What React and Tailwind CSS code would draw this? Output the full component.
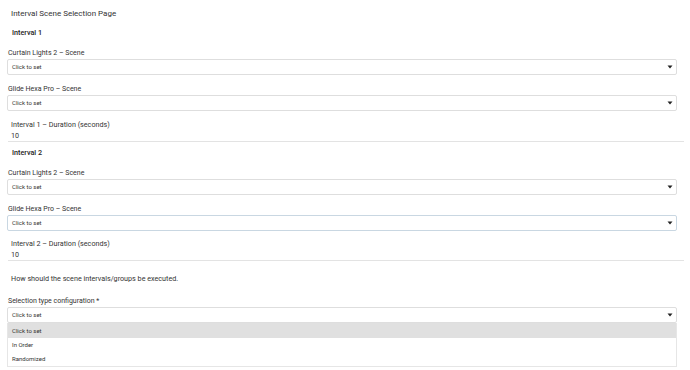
import React from "react";

const Arrow = () => (
  <svg width="6" height="4" viewBox="0 0 6 4" className="shrink-0">
    <path d="M0.5 0.5 L5.5 0.5 L3 3.5 Z" fill="#222" />
  </svg>
);

const SelectBox = ({ focused = false }) => (
  <div
    className={
      "w-[670px] h-[16px] flex items-center justify-between pl-[4px] pr-[3px] bg-white rounded-[2px] border " +
      (focused ? "border-[#c9d7e2]" : "border-[#dedede]")
    }
  >
    <span className="text-[6px] leading-[16px] text-[#333]">Click to set</span>
    <Arrow />
  </div>
);

const Field = ({ label, mt, focused }) => (
  <div className={mt}>
    <div className="pl-[8px] h-[12px] leading-[12px] text-[7px] text-[#333]">{label}</div>
    <div className="pl-[7px]">
      <SelectBox focused={focused} />
    </div>
  </div>
);

const Duration = ({ n, mt }) => (
  <div className={mt + " ml-[8px] w-[676px] border-b border-[#e3e3e3]"}>
    <div className="pl-[3px] h-[10px] leading-[10px] text-[7.2px] text-[#333]">
      Interval {n} – Duration (seconds)
    </div>
    <div className="pl-[3px] h-[11px] leading-[11px] text-[7.2px] text-[#333]">10</div>
  </div>
);

const App = () => {
  return (
    <div className="w-[690px] h-[370px] bg-white overflow-hidden antialiased font-['Roboto',sans-serif]">
      <div className="pt-[8px] pl-[11px] h-[20px] leading-[12px] text-[8px] text-[#333]">
        Interval Scene Selection Page
      </div>

      <div className="mt-[7px] pl-[12px] h-[12px] leading-[12px] text-[7.2px] font-medium text-[#222]">
        Interval 1
      </div>
      <Field label="Curtain Lights 2 – Scene" mt="mt-[8px]" />
      <Field label="Glide Hexa Pro – Scene" mt="mt-[8px]" />
      <Duration n={1} mt="mt-[9px]" />

      <div className="mt-[5px] pl-[12px] h-[12px] leading-[12px] text-[7.2px] font-medium text-[#222]">
        Interval 2
      </div>
      <Field label="Curtain Lights 2 – Scene" mt="mt-[8px]" />
      <Field label="Glide Hexa Pro – Scene" mt="mt-[8px]" focused />
      <Duration n={2} mt="mt-[8px]" />

      <div className="mt-[12px] pl-[11px] h-[12px] leading-[12px] text-[7.2px] text-[#333]">
        How should the scene intervals/groups be executed.
      </div>

      <Field label="Selection type configuration *" mt="mt-[10px]" />
      <div className="ml-[7px] w-[670px] border-x border-b border-[#e6e6e6] text-[6px] text-[#333]">
        <div className="h-[15px] leading-[15px] pl-[4px] bg-[#e0e0e0]">Click to set</div>
        <div className="h-[14px] leading-[14px] pl-[4px]">In Order</div>
        <div className="h-[14px] leading-[14px] pl-[4px]">Randomized</div>
      </div>
    </div>
  );
};

export default App;
